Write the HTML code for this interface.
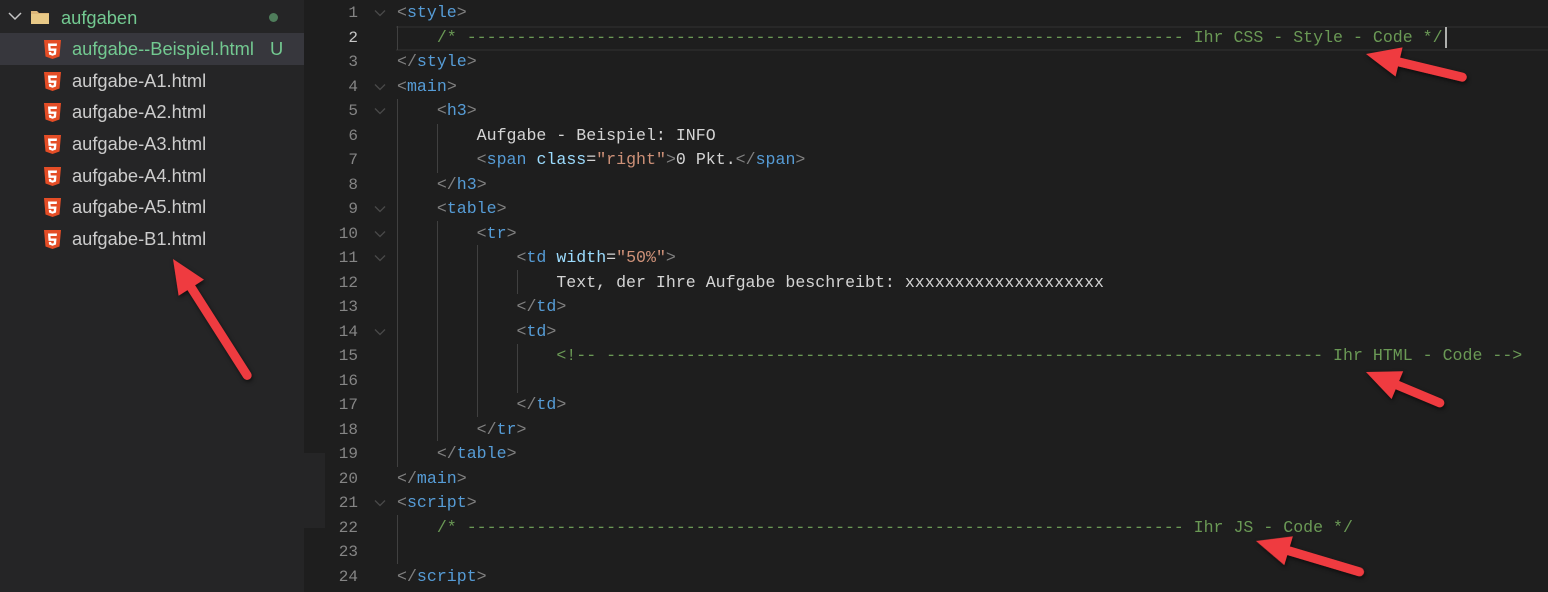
<!DOCTYPE html>
<html><head><meta charset="utf-8"><style>
*{margin:0;padding:0;box-sizing:border-box}
body{width:1548px;height:592px;background:#1e1e1e;position:relative;overflow:hidden;font-family:"Liberation Sans",sans-serif}
#side{position:absolute;left:0;top:0;width:304px;height:592px;background:#252526}
.row{position:absolute;left:0;width:304px;height:32px;line-height:32px;font-size:18.3px;color:#cccccc}
.row .t{position:absolute;left:72px}
.row svg{position:absolute;left:44px;top:7px}
#strip{position:absolute;left:304px;top:453px;width:21px;height:75px;background:#252526}
.ln{position:absolute;left:325px;width:33px;text-align:right;font-family:"Liberation Mono",monospace;font-size:16px;color:#858585;height:24.5px;line-height:24.5px}
.fold{position:absolute;left:373px;width:14px;height:24.5px}
.code{position:absolute;left:397px;white-space:pre;font-family:"Liberation Mono",monospace;font-size:16.6px;height:24.5px;line-height:24.5px;color:#d4d4d4}
.b{color:#808080}.n{color:#569cd6}.a{color:#9cdcfe}.s{color:#ce9178}.c{color:#6a9955}
.g{position:absolute;width:1px;background:#404040}
</style></head><body>
<div id="side">
 <div class="row" style="top:1px;height:33px;line-height:33px">
  <svg style="left:8px;top:11px" width="14" height="10" viewBox="0 0 14 10"><path d="M1 1 L7 7 L13 1" fill="none" stroke="#c5c5c5" stroke-width="1.5"/></svg>
  <svg style="left:30px;top:8px" width="20" height="16" viewBox="0 0 20 16"><path d="M1 2h6l2 2h10v11H1z" fill="#dcb67a"/><path d="M1 5h18v10H1z" fill="#e8c987"/></svg>
  <span class="t" style="left:61px;color:#73c991">aufgaben</span>
  <span style="position:absolute;left:269px;top:12px;width:9px;height:9px;border-radius:50%;background:#4f7d5b"></span>
 </div>
 <div class="row" style="top:33px;background:#37373d"><svg width="17" height="19" viewBox="0 0 17 19"><path d="M0 0h17l-1.5 16.5L8.5 19 1.5 16.5z" fill="#e44d26"/><path d="M4 3.5h9l-.3 2.5H6.5l.2 2.5h5.8l-.5 6-3.5 1.2-3.5-1.2-.2-2.6h2.4l.1 1.2 1.2.4 1.2-.4.2-2.2H4.5z" fill="#fff"/></svg><span class="t" style="color:#73c991">aufgabe--Beispiel.html</span><span style="position:absolute;left:270px;color:#73c991">U</span></div>
 <div class="row" style="top:65px"><svg width="17" height="19" viewBox="0 0 17 19"><path d="M0 0h17l-1.5 16.5L8.5 19 1.5 16.5z" fill="#e44d26"/><path d="M4 3.5h9l-.3 2.5H6.5l.2 2.5h5.8l-.5 6-3.5 1.2-3.5-1.2-.2-2.6h2.4l.1 1.2 1.2.4 1.2-.4.2-2.2H4.5z" fill="#fff"/></svg><span class="t">aufgabe-A1.html</span></div>
 <div class="row" style="top:96px"><svg width="17" height="19" viewBox="0 0 17 19"><path d="M0 0h17l-1.5 16.5L8.5 19 1.5 16.5z" fill="#e44d26"/><path d="M4 3.5h9l-.3 2.5H6.5l.2 2.5h5.8l-.5 6-3.5 1.2-3.5-1.2-.2-2.6h2.4l.1 1.2 1.2.4 1.2-.4.2-2.2H4.5z" fill="#fff"/></svg><span class="t">aufgabe-A2.html</span></div>
 <div class="row" style="top:128px"><svg width="17" height="19" viewBox="0 0 17 19"><path d="M0 0h17l-1.5 16.5L8.5 19 1.5 16.5z" fill="#e44d26"/><path d="M4 3.5h9l-.3 2.5H6.5l.2 2.5h5.8l-.5 6-3.5 1.2-3.5-1.2-.2-2.6h2.4l.1 1.2 1.2.4 1.2-.4.2-2.2H4.5z" fill="#fff"/></svg><span class="t">aufgabe-A3.html</span></div>
 <div class="row" style="top:160px"><svg width="17" height="19" viewBox="0 0 17 19"><path d="M0 0h17l-1.5 16.5L8.5 19 1.5 16.5z" fill="#e44d26"/><path d="M4 3.5h9l-.3 2.5H6.5l.2 2.5h5.8l-.5 6-3.5 1.2-3.5-1.2-.2-2.6h2.4l.1 1.2 1.2.4 1.2-.4.2-2.2H4.5z" fill="#fff"/></svg><span class="t">aufgabe-A4.html</span></div>
 <div class="row" style="top:191px"><svg width="17" height="19" viewBox="0 0 17 19"><path d="M0 0h17l-1.5 16.5L8.5 19 1.5 16.5z" fill="#e44d26"/><path d="M4 3.5h9l-.3 2.5H6.5l.2 2.5h5.8l-.5 6-3.5 1.2-3.5-1.2-.2-2.6h2.4l.1 1.2 1.2.4 1.2-.4.2-2.2H4.5z" fill="#fff"/></svg><span class="t">aufgabe-A5.html</span></div>
 <div class="row" style="top:223px"><svg width="17" height="19" viewBox="0 0 17 19"><path d="M0 0h17l-1.5 16.5L8.5 19 1.5 16.5z" fill="#e44d26"/><path d="M4 3.5h9l-.3 2.5H6.5l.2 2.5h5.8l-.5 6-3.5 1.2-3.5-1.2-.2-2.6h2.4l.1 1.2 1.2.4 1.2-.4.2-2.2H4.5z" fill="#fff"/></svg><span class="t">aufgabe-B1.html</span></div>
</div>
<div id="strip"></div>
<div style="position:absolute;left:396px;top:25.5px;width:1152px;height:25px;border-top:2px solid #282828;border-bottom:2px solid #282828"></div>
<div style="position:absolute;left:1445px;top:27px;width:2px;height:21px;background:#aeafad"></div>

<div class="g" style="left:397px;top:26px;height:24px"></div>
<div class="g" style="left:397px;top:99px;height:368px"></div>
<div class="g" style="left:397px;top:515px;height:49px"></div>
<div class="g" style="left:437px;top:124px;height:49px"></div>
<div class="g" style="left:437px;top:221px;height:220px"></div>
<div class="g" style="left:477px;top:245px;height:172px"></div>
<div class="g" style="left:517px;top:270px;height:24px"></div>
<div class="g" style="left:517px;top:344px;height:49px"></div>

<div id="lines"></div>
<script>
var D='-'.repeat(72);
var L=[
'<span class="b">&lt;</span><span class="n">style</span><span class="b">&gt;</span>',
'    <span class="c">/* '+D+' Ihr CSS - Style - Code */</span>',
'<span class="b">&lt;/</span><span class="n">style</span><span class="b">&gt;</span>',
'<span class="b">&lt;</span><span class="n">main</span><span class="b">&gt;</span>',
'    <span class="b">&lt;</span><span class="n">h3</span><span class="b">&gt;</span>',
'        Aufgabe - Beispiel: INFO',
'        <span class="b">&lt;</span><span class="n">span</span> <span class="a">class</span>=<span class="s">"right"</span><span class="b">&gt;</span>0 Pkt.<span class="b">&lt;/</span><span class="n">span</span><span class="b">&gt;</span>',
'    <span class="b">&lt;/</span><span class="n">h3</span><span class="b">&gt;</span>',
'    <span class="b">&lt;</span><span class="n">table</span><span class="b">&gt;</span>',
'        <span class="b">&lt;</span><span class="n">tr</span><span class="b">&gt;</span>',
'            <span class="b">&lt;</span><span class="n">td</span> <span class="a">width</span>=<span class="s">"50%"</span><span class="b">&gt;</span>',
'                Text, der Ihre Aufgabe beschreibt: xxxxxxxxxxxxxxxxxxxx',
'            <span class="b">&lt;/</span><span class="n">td</span><span class="b">&gt;</span>',
'            <span class="b">&lt;</span><span class="n">td</span><span class="b">&gt;</span>',
'                <span class="c">&lt;!-- '+D+' Ihr HTML - Code --&gt;</span>',
'',
'            <span class="b">&lt;/</span><span class="n">td</span><span class="b">&gt;</span>',
'        <span class="b">&lt;/</span><span class="n">tr</span><span class="b">&gt;</span>',
'    <span class="b">&lt;/</span><span class="n">table</span><span class="b">&gt;</span>',
'<span class="b">&lt;/</span><span class="n">main</span><span class="b">&gt;</span>',
'<span class="b">&lt;</span><span class="n">script</span><span class="b">&gt;</span>',
'    <span class="c">/* '+D+' Ihr JS - Code */</span>',
'',
'<span class="b">&lt;/</span><span class="n">script</span><span class="b">&gt;</span>'];
var folds=[1,4,5,9,10,11,14,21];
var h='';
for(var i=0;i<24;i++){var t=1+i*24.5;
h+='<div class="ln" style="top:'+t+'px'+(i==1?';color:#c6c6c6':'')+'">'+(i+1)+'</div>';
if(folds.indexOf(i+1)>=0)h+='<svg class="fold" style="top:'+t+'px" viewBox="0 0 14 24.5"><path d="M2 9.5 L7 14.5 L12 9.5" fill="none" stroke="#4a4a4a" stroke-width="1.3"/></svg>';
h+='<div class="code" style="top:'+t+'px">'+L[i]+'</div>';}
document.getElementById('lines').innerHTML=h;
</script>

<svg style="position:absolute;left:0;top:0" width="1548" height="592">
<defs><filter id="sh" x="-20%" y="-20%" width="140%" height="140%"><feDropShadow dx="1" dy="2" stdDeviation="2" flood-color="#000" flood-opacity="0.6"/></filter></defs>
<g fill="#ef3b3f" stroke="#ef3b3f" filter="url(#sh)">
<g transform="translate(173,259) rotate(57.5)"><line x1="25" y1="0" x2="138" y2="0" stroke-width="9" stroke-linecap="round"/><polygon points="0,0 34,-15 34,15" stroke="none"/></g>
<g transform="translate(1366,54) rotate(13.5)"><line x1="25" y1="0" x2="99" y2="0" stroke-width="9" stroke-linecap="round"/><polygon points="0,0 34,-15 34,15" stroke="none"/></g>
<g transform="translate(1366,372) rotate(22.7)"><line x1="25" y1="0" x2="80" y2="0" stroke-width="9" stroke-linecap="round"/><polygon points="0,0 34,-15 34,15" stroke="none"/></g>
<g transform="translate(1256,541) rotate(16.6)"><line x1="25" y1="0" x2="108" y2="0" stroke-width="9" stroke-linecap="round"/><polygon points="0,0 34,-15 34,15" stroke="none"/></g>
</g></svg>
</body></html>
